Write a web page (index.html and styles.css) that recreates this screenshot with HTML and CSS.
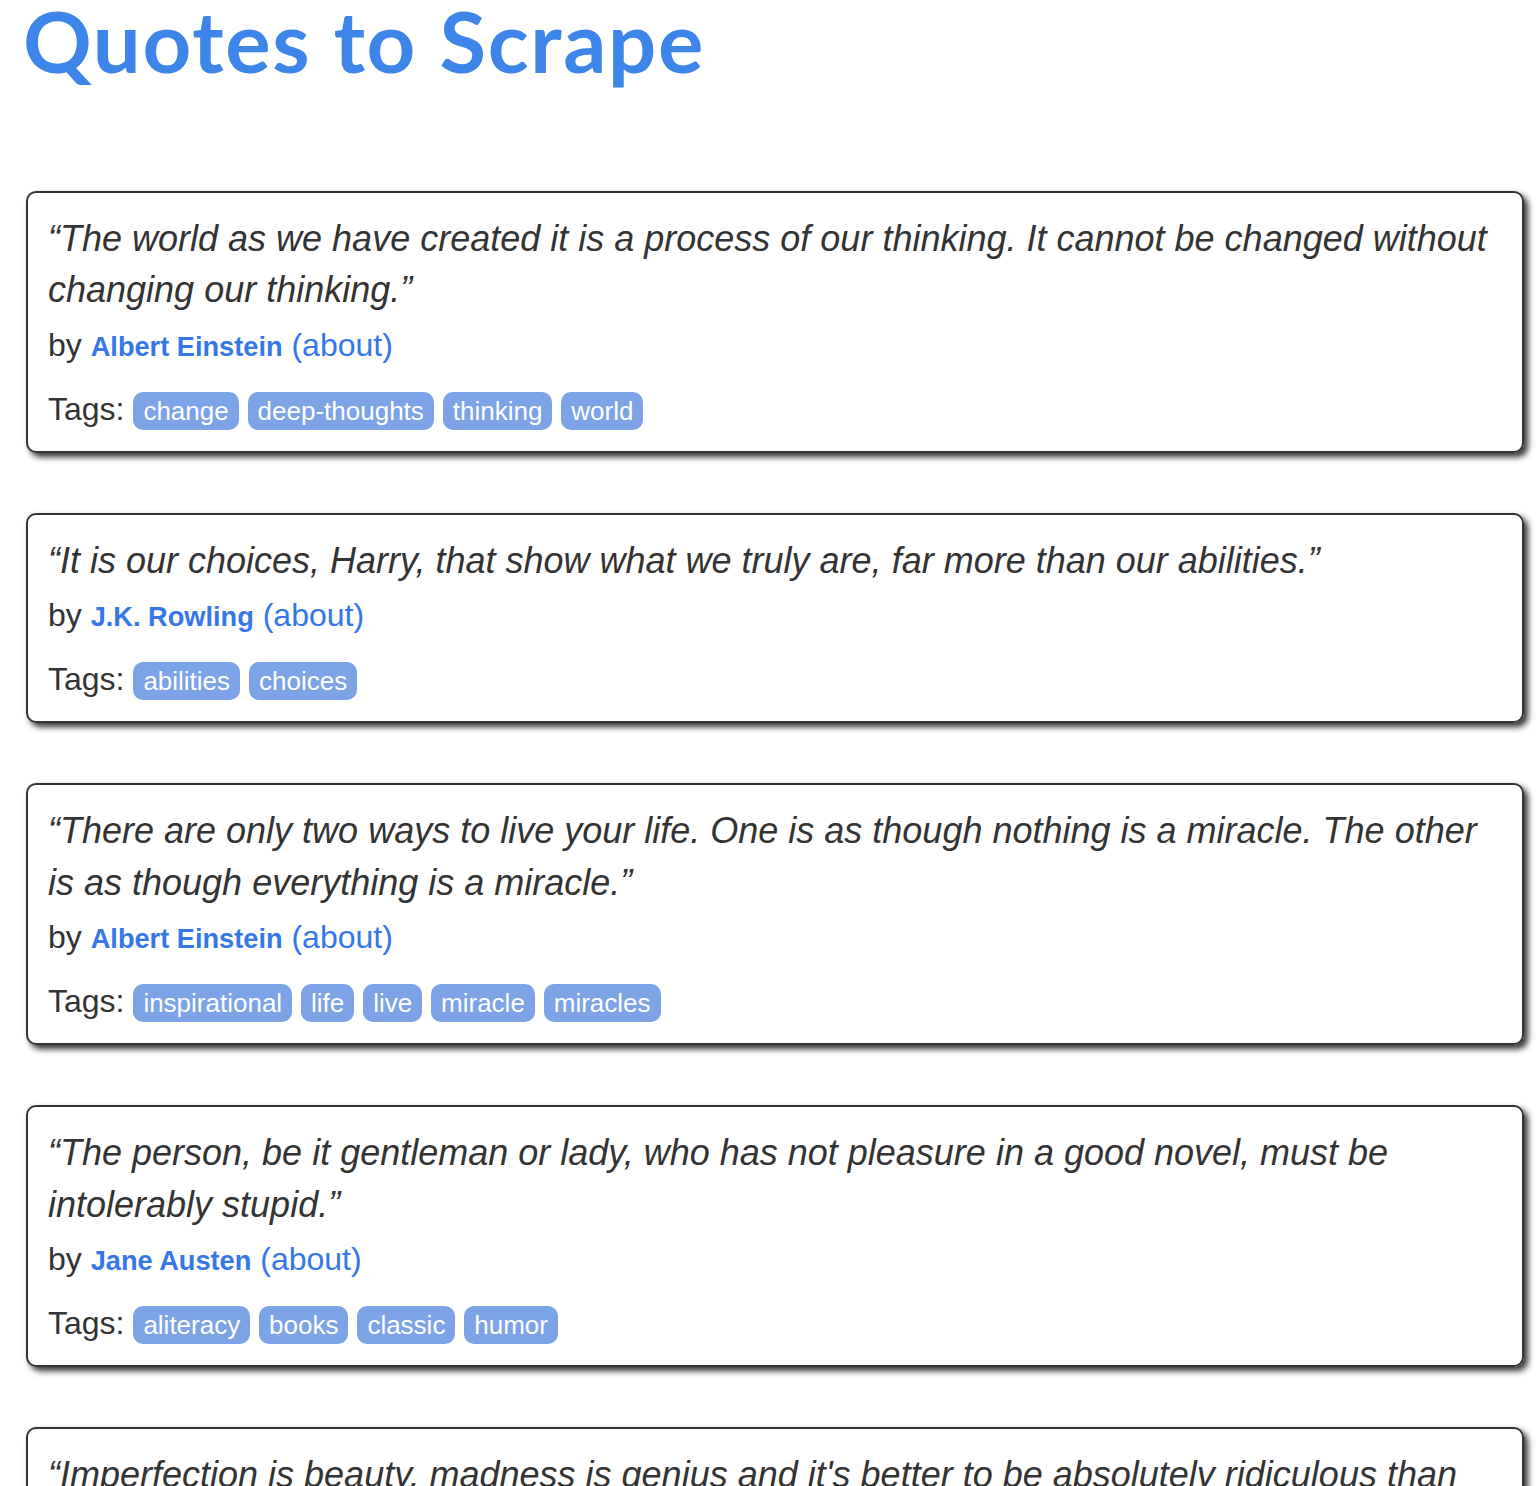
FILE: index.html
```html
<!DOCTYPE html>
<html lang="en">
<head>
<meta charset="UTF-8">
<meta name="viewport" content="width=device-width, initial-scale=1.0">
<title>Quotes to Scrape</title>
<link rel="stylesheet" href="styles.css">
</head>
<body>
<div class="container">
    <div class="header-box">
        <h1><a href="#">Quotes to Scrape</a></h1>
    </div>

    <div class="quote">
        <span class="text">“The world as we have created it is a process of our thinking. It cannot be changed without changing our thinking.”</span>
        <span class="by">by <small class="author">Albert Einstein</small> <a href="#">(about)</a></span>
        <div class="tags">
            Tags:
            <a class="tag" href="#">change</a>
            <a class="tag" href="#">deep-thoughts</a>
            <a class="tag" href="#">thinking</a>
            <a class="tag" href="#">world</a>
        </div>
    </div>

    <div class="quote">
        <span class="text">“It is our choices, Harry, that show what we truly are, far more than our abilities.”</span>
        <span class="by">by <small class="author">J.K. Rowling</small> <a href="#">(about)</a></span>
        <div class="tags">
            Tags:
            <a class="tag" href="#">abilities</a>
            <a class="tag" href="#">choices</a>
        </div>
    </div>

    <div class="quote">
        <span class="text">“There are only two ways to live your life. One is as though nothing is a miracle. The other is as though everything is a miracle.”</span>
        <span class="by">by <small class="author">Albert Einstein</small> <a href="#">(about)</a></span>
        <div class="tags">
            Tags:
            <a class="tag" href="#">inspirational</a>
            <a class="tag" href="#">life</a>
            <a class="tag" href="#">live</a>
            <a class="tag" href="#">miracle</a>
            <a class="tag" href="#">miracles</a>
        </div>
    </div>

    <div class="quote">
        <span class="text">“The person, be it gentleman or lady, who has not pleasure in a good novel, must be intolerably stupid.”</span>
        <span class="by">by <small class="author">Jane Austen</small> <a href="#">(about)</a></span>
        <div class="tags">
            Tags:
            <a class="tag" href="#">aliteracy</a>
            <a class="tag" href="#">books</a>
            <a class="tag" href="#">classic</a>
            <a class="tag" href="#">humor</a>
        </div>
    </div>

    <div class="quote">
        <span class="text">“Imperfection is beauty, madness is genius and it's better to be absolutely ridiculous than absolutely boring.”</span>
        <span class="by">by <small class="author">Marilyn Monroe</small> <a href="#">(about)</a></span>
        <div class="tags">
            Tags:
            <a class="tag" href="#">be-yourself</a>
            <a class="tag" href="#">inspirational</a>
        </div>
    </div>
</div>
</body>
</html>
```

FILE: styles.css
```css
body {
    margin: 0;
    font-family: 'Liberation Sans', Arial, sans-serif;
    color: #333333;
    background: #ffffff;
}

a {
    color: #3677e8;
    text-decoration: none;
}

.container {
    margin-left: 26px;
    width: 1498px;
}

.header-box h1 {
    margin: 0 0 111px -3px;
    font-family: 'Lato', 'Open Sans', sans-serif;
    font-weight: 700;
    font-size: 85px;
    line-height: 80px;
    letter-spacing: 1.7px;
}

.header-box h1 a {
    color: #3d85e9;
}

.quote {
    padding: 20px;
    margin-bottom: 60px;
    border: 2px solid #333333;
    border-radius: 10px;
    box-shadow: 4px 4px 6px #333333;
}

.quote .text {
    display: block;
    font-size: 36px;
    line-height: 1.42857;
    font-style: italic;
}

.quote .by {
    display: block;
    margin-top: 7px;
    font-size: 32px;
    line-height: 44px;
}

.quote .author {
    font-size: 85%;
    line-height: 1;
    font-weight: bold;
    color: #3677e8;
}

.tags {
    margin-top: 20px;
    font-size: 32px;
    line-height: 44px;
}

.tags .tag {
    padding: 4px 10px;
    border-radius: 10px;
    font-size: 26px;
    line-height: 1;
    color: #ffffff;
    background-color: #7ca3e6;
}
```
